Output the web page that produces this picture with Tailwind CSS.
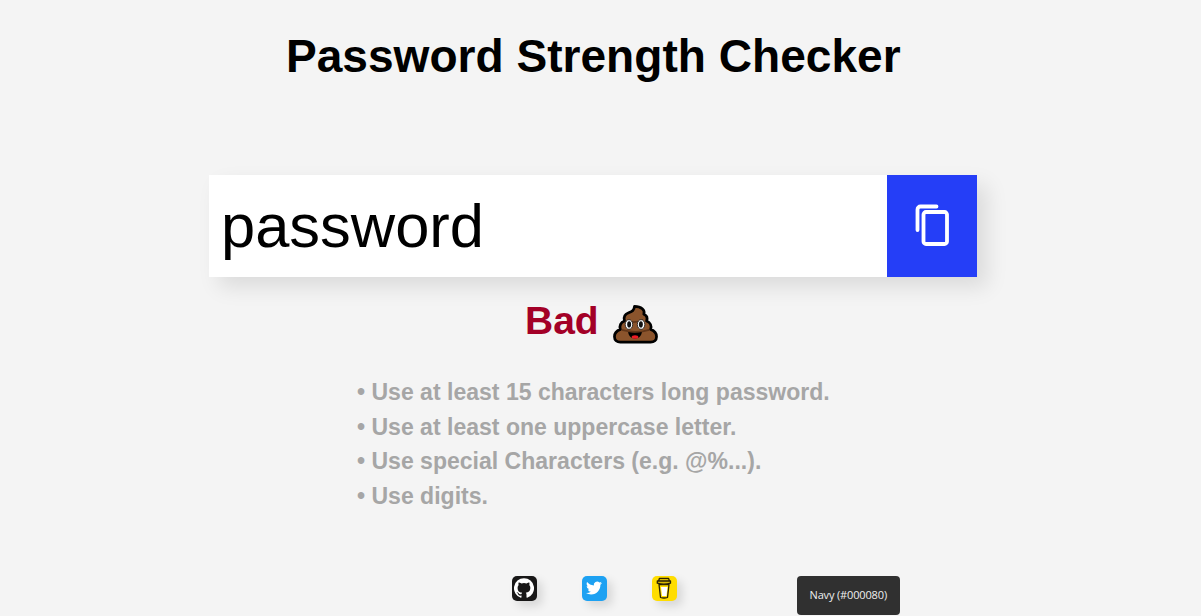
<!DOCTYPE html>
<html lang="en">
<head>
  <meta charset="UTF-8">
  <title>Password Strength Checker</title>
  <script src="https://cdn.jsdelivr.net/npm/@tailwindcss/browser@4"></script>
</head>
<body class="bg-[#f4f4f4] h-screen overflow-hidden font-['Liberation_Sans',Arial,sans-serif] text-black">
  <main class="w-[768px] ml-[209px] pt-[30px] flex flex-col">
    <h1 class="pl-[77px] text-[46.08px] leading-[53px] font-bold whitespace-nowrap">Password Strength Checker</h1>

    <div class="mt-[92px] h-[102px] flex shadow-[10px_10px_20px_rgba(0,0,0,0.1)]">
      <input type="text" value="password" spellcheck="false" class="w-[678px] bg-white pl-3 text-[61.44px] outline-none">
      <button class="w-[90px] bg-[#253ef7] flex items-center justify-center pb-[2px]" aria-label="Copy">
        <svg class="w-9 h-[42px]" viewBox="0 0 36 42" fill="none" stroke="#fff" stroke-width="3.8" stroke-linecap="round" stroke-linejoin="round">
          <path d="M3.500 26V5.500a3 3 0 0 1 3-3H22.500"/>
          <rect x="9.500" y="8" width="23.500" height="32" rx="2.500"/>
        </svg>
      </button>
    </div>

    <div class="mt-[21px] pl-[316px] h-[46px] flex items-center">
      <h2 class="w-[72px] text-[39px] leading-[46px] font-bold text-[#a30027]">Bad</h2>
      <svg class="w-[45px] h-10 ml-4 mt-[5px]" viewBox="0 0 46 40" role="img" aria-label="Pile of poo">
        <path d="M22 2c-.5 4-2 5-6 6.500-4 1.500-5.500 4.500-4.200 8.500-4 1.300-5.500 5-4.300 8.500C3.500 27 1.500 29.500 1.500 33c0 3.500 2.500 5.500 6 5.500h31c3.500 0 6-2 6-5.500 0-3.500-2-6-6-7.500 1.200-3.500-.2-7-4.200-8.500 1.300-3.500-.3-6-2.800-7C33 6 29 2 22 2z" fill="#8b542c" stroke="#000" stroke-width="2.800" stroke-linejoin="round"/>
        <path d="M13 17c6 1.500 13 1 18-1M9 26c9 2.500 20 2.500 28 0" fill="none" stroke="#613619" stroke-width="1.800"/>
        <ellipse cx="16.300" cy="20.500" rx="3.800" ry="4.900" fill="#fff" stroke="#111" stroke-width=".8"/>
        <ellipse cx="28.700" cy="20.500" rx="3.800" ry="4.900" fill="#fff" stroke="#111" stroke-width=".8"/>
        <ellipse cx="16.500" cy="20.500" rx="2" ry="3.200" fill="#111"/>
        <ellipse cx="28.500" cy="20.500" rx="2" ry="3.200" fill="#111"/>
        <path d="M15.500 28.300q7 1.200 14 0c-.5 4-3 6.700-7 6.700s-6.500-2.700-7-6.700z" fill="#000"/>
        <ellipse cx="22.500" cy="33.300" rx="3.400" ry="1.800" fill="#ed1c24"/>
      </svg>
    </div>

    <ul class="mt-[31px] pl-[148px] text-[23.04px] leading-[34.56px] font-bold text-[#a6a6a6] whitespace-nowrap">
      <li>• Use at least 15 characters long password.</li>
      <li>• Use at least one uppercase letter.</li>
      <li>• Use special Characters (e.g. @%...).</li>
      <li>• Use digits.</li>
    </ul>

    <footer class="mt-[62.5px] pl-[302.500px] flex gap-[45px]">
      <a class="size-[25px] rounded-[5px] bg-[#181717] shadow-[5px_5px_10px_rgba(0,0,0,0.12)] flex items-center justify-center" aria-label="GitHub">
        <svg class="size-5 mb-px" viewBox="0 0 24 24" fill="#fff">
          <path d="M12 .3a12 12 0 0 0-3.800 23.400c.6.1.8-.3.800-.6v-2c-3.300.7-4-1.600-4-1.600-.6-1.400-1.400-1.800-1.400-1.800-1-.7.1-.7.100-.7 1.200 0 1.900 1.200 1.900 1.200 1 1.800 2.800 1.300 3.500 1 0-.8.4-1.300.7-1.600-2.700-.3-5.500-1.300-5.500-6 0-1.200.5-2.300 1.300-3.100-.2-.4-.6-1.600 0-3.200 0 0 1-.3 3.400 1.200a11.500 11.500 0 0 1 6 0c2.300-1.500 3.300-1.200 3.300-1.200.6 1.600.2 2.800 0 3.200.9.8 1.300 1.900 1.300 3.200 0 4.600-2.800 5.600-5.500 5.900.5.400.9 1 .9 2.200v3.300c0 .3.100.7.800.6A12 12 0 0 0 12 .3"/>
        </svg>
      </a>
      <a class="size-[25px] rounded-[5px] bg-[#1da1f2] shadow-[5px_5px_10px_rgba(0,0,0,0.12)] flex items-center justify-center" aria-label="Twitter">
        <svg class="size-4 mb-px" viewBox="0 0 24 24" fill="#fff">
          <path d="M23.950 4.570a10 10 0 0 1-2.820.77 4.960 4.960 0 0 0 2.160-2.720c-.95.550-2 .95-3.130 1.180a4.920 4.920 0 0 0-8.380 4.480C7.690 8.090 4.070 6.130 1.640 3.160a4.820 4.820 0 0 0-.67 2.480c0 1.710.87 3.210 2.190 4.100a4.900 4.900 0 0 1-2.230-.62v.06a4.920 4.920 0 0 0 3.950 4.830 5 5 0 0 1-2.210.08 4.940 4.940 0 0 0 4.600 3.420A9.870 9.870 0 0 1 0 19.540a14 14 0 0 0 7.550 2.210c9.050 0 14-7.500 14-13.980 0-.21 0-.42-.02-.63a9.940 9.940 0 0 0 2.460-2.550z"/>
        </svg>
      </a>
      <a class="size-[25px] rounded-[5px] bg-[#ffdd00] shadow-[5px_5px_10px_rgba(0,0,0,0.12)] flex items-center justify-center" aria-label="Buy me a coffee">
        <svg class="w-4 h-[22px] mr-px" viewBox="0 0 16 22" stroke="#2a2204" stroke-width="1.300" stroke-linejoin="round">
          <path d="M3 7.500h10L11.500 20.500q-3.500 1-7 0z" fill="#ffdd00"/>
          <path d="M5 10h6.500l-1 9h-4.500z" fill="#fff" stroke="none"/>
          <path d="M3.500 1.300h9l1 2.700h-11zM1.300 4h13.200v2.200q-6.600 2-13.200 0z" fill="#d9b900"/>
        </svg>
      </a>
    </footer>
  </main>

  <div class="absolute left-[797px] top-[575.5px] w-[102.5px] h-[39.5px] rounded-[4px] bg-[#303030] flex items-center justify-center font-['Open_Sans',sans-serif] text-[11px] tracking-[-0.15px] text-[#eee] whitespace-nowrap">Navy (#000080)</div>
</body>
</html>
